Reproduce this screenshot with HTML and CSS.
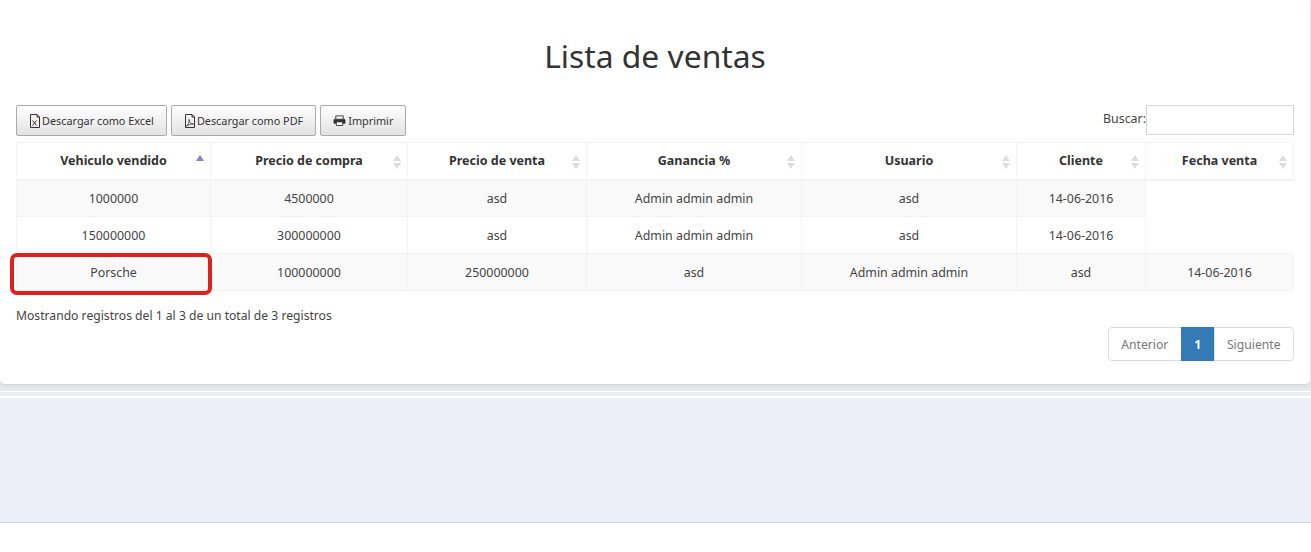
FILE: index.html
```html
<!DOCTYPE html>
<html lang="es">
<head>
<meta charset="utf-8">
<title>Lista de ventas</title>
<link rel="stylesheet" href="styles.css">
</head>
<body>
<div class="content">
  <section class="card">
    <h1 class="title">Lista de ventas</h1>
    <div class="toolbar">
      <div class="buttons">
        <button class="btn"><svg class="ico" viewBox="0 0 12 14"><path d="M1.500.5h6.500l2.500 2.500v10.500h-9z M8 .5v2.500h2.500" fill="none" stroke="#333"/><path d="M3.500 6.500l4 5M7.500 6.500l-4 5" fill="none" stroke="#333"/></svg>Descargar como Excel</button>
        <button class="btn"><svg class="ico" viewBox="0 0 12 14"><path d="M1.500.5h6.500l2.500 2.500v10.500h-9z M8 .5v2.500h2.500" fill="none" stroke="#333"/><path d="M2.500 12c2-1 3-4 2.500-6.500 0 2.500 2 4.500 4.500 4.500-2.500 0-5 .5-7 2z" fill="none" stroke="#333" stroke-width=".8"/></svg>Descargar como PDF</button>
        <button class="btn"><svg class="ico ico-print" viewBox="0 0 14 12"><path d="M3 4V1h8v3M3 9H1V5.500a1 1 0 0 1 1-1h10a1 1 0 0 1 1 1V9h-2" fill="#333" stroke="#333"/><path d="M3.500 1.500h7V4h-7z" fill="#fff"/><path d="M3.500 7.500h7v4h-7z" fill="#fff" stroke="#333"/></svg>Imprimir</button>
      </div>
      <label class="search">Buscar:<input class="search-input" type="text"></label>
    </div>
    <table class="table">
      <colgroup>
        <col class="c1"><col class="c2"><col class="c3"><col class="c4"><col class="c5"><col class="c6"><col class="c7">
      </colgroup>
      <thead>
        <tr>
          <th class="asc">Vehiculo vendido</th>
          <th>Precio de compra</th>
          <th>Precio de venta</th>
          <th>Ganancia %</th>
          <th>Usuario</th>
          <th>Cliente</th>
          <th>Fecha venta</th>
        </tr>
      </thead>
      <tbody>
        <tr class="odd"><td>1000000</td><td>4500000</td><td>asd</td><td>Admin admin admin</td><td>asd</td><td>14-06-2016</td></tr>
        <tr><td>150000000</td><td>300000000</td><td>asd</td><td>Admin admin admin</td><td>asd</td><td>14-06-2016</td></tr>
        <tr class="odd"><td class="marked">Porsche</td><td>100000000</td><td>250000000</td><td>asd</td><td>Admin admin admin</td><td>asd</td><td>14-06-2016</td></tr>
      </tbody>
    </table>
    <p class="info">Mostrando registros del 1 al 3 de un total de 3 registros</p>
    <nav class="pager">
      <a class="page">Anterior</a><a class="page current">1</a><a class="page">Siguiente</a>
    </nav>
  </section>
  <div class="band"></div>
</div>
<footer class="footer"></footer>
</body>
</html>
```
FILE: styles.css
```css
*, *::before, *::after { box-sizing: border-box; }
html, body { margin: 0; height: 552px; overflow: hidden; }
body {
  background: #fff;
  font-family: "Noto Sans", "Liberation Sans", sans-serif;
  font-size: 12.4px;
  color: #333;
  display: flex;
  flex-direction: column;
}
.content { height: 523px; flex: none; background: #eceff7; border-bottom: 1px solid #d2d6de; }
.card {
  position: relative;
  width: 1310px;
  height: 384px;
  background: #fff;
  border-radius: 0 0 5px 5px;
  padding: 38px 16px 0 16px;
  box-shadow: 0 1px 4px rgba(120,130,150,.25);
}
.title { margin: 0; font-size: 31.8px; line-height: 36px; font-weight: 400; text-align: center; color: #333; }
.toolbar { display: flex; justify-content: space-between; margin-top: 31px; height: 31px; }
.buttons { display: flex; gap: 4px; }
.btn {
  display: flex; align-items: center; justify-content: center;
  height: 31px; padding: 0 12px;
  font: inherit; font-size: 10.85px; color: #333;
  background: linear-gradient(#fff, #e2e2e2);
  border: 1px solid #aaa; border-radius: 2px;
}
.ico { width: 12px; height: 14px; margin-right: 1px; flex: none; }
.ico-print { width: 13px; height: 11px; margin-right: 2px; }
.search { display: flex; align-items: flex-start; color: #444; line-height: 27px; }
.search-input { width: 148px; height: 30px; margin: 0; border: 1px solid #d2d6de; background: #fff; }
.table { width: 1277px; margin-top: 6px; border-collapse: collapse; table-layout: fixed; }
.c1 { width: 194px; } .c2 { width: 197px; } .c3 { width: 179px; } .c4 { width: 215px; }
.c5 { width: 215px; } .c6 { width: 129px; } .c7 { width: 148px; }
.table th {
  height: 37px; padding: 0 8px 1px; text-align: center; font-weight: 700; font-size: 12.5px; color: #333;
  border: 1px solid #f4f4f4; border-bottom-width: 2px;
  position: relative;
}
.table th::before, .table th::after {
  content: ""; position: absolute; right: 6px; width: 0; height: 0;
  border-left: 4px solid transparent; border-right: 4px solid transparent;
}
.table th::before { top: 12px; border-bottom: 6px solid #ddd; }
.table th::after { top: 20px; border-top: 6px solid #ddd; }
.table th.asc::before { border-bottom-color: #7b83d3; }
.table th.asc::after { border: 0; }
.table td {
  height: 37px; padding: 0 8px; text-align: center; color: #444;
  border: 1px solid #f4f4f4;
}
.table tr.odd td { background: #f9f9f9; }
.table td.marked { position: relative; }
.table td.marked::after {
  content: ""; position: absolute; left: -7px; top: -1px; width: 202px; height: 42px;
  border: 4px solid #e0201b; border-radius: 7px;
}
.info { margin: 16px 0 0; line-height: 17px; font-size: 12.15px; color: #444; }
.pager { display: flex; justify-content: flex-end; margin-top: 3px; }
.page {
  height: 34px; line-height: 33px; padding: 0 12.4px; font-size: 12.2px; color: #777;
  background: #fff; border: 1px solid #ddd; margin-left: -1px;
}
.page:first-child { border-radius: 4px 0 0 4px; }
.page:last-child { border-radius: 0 4px 4px 0; }
.page.current { background: #337ab7; border-color: #337ab7; color: #fff; font-weight: 700; }
.band { height: 14px; background: linear-gradient(#e6e9ed 0 7px, #fff 7px 8px, #e9edf1 8px 12px, #fff 12px 14px); }
.footer { flex: 1; background: #fff; }
```
